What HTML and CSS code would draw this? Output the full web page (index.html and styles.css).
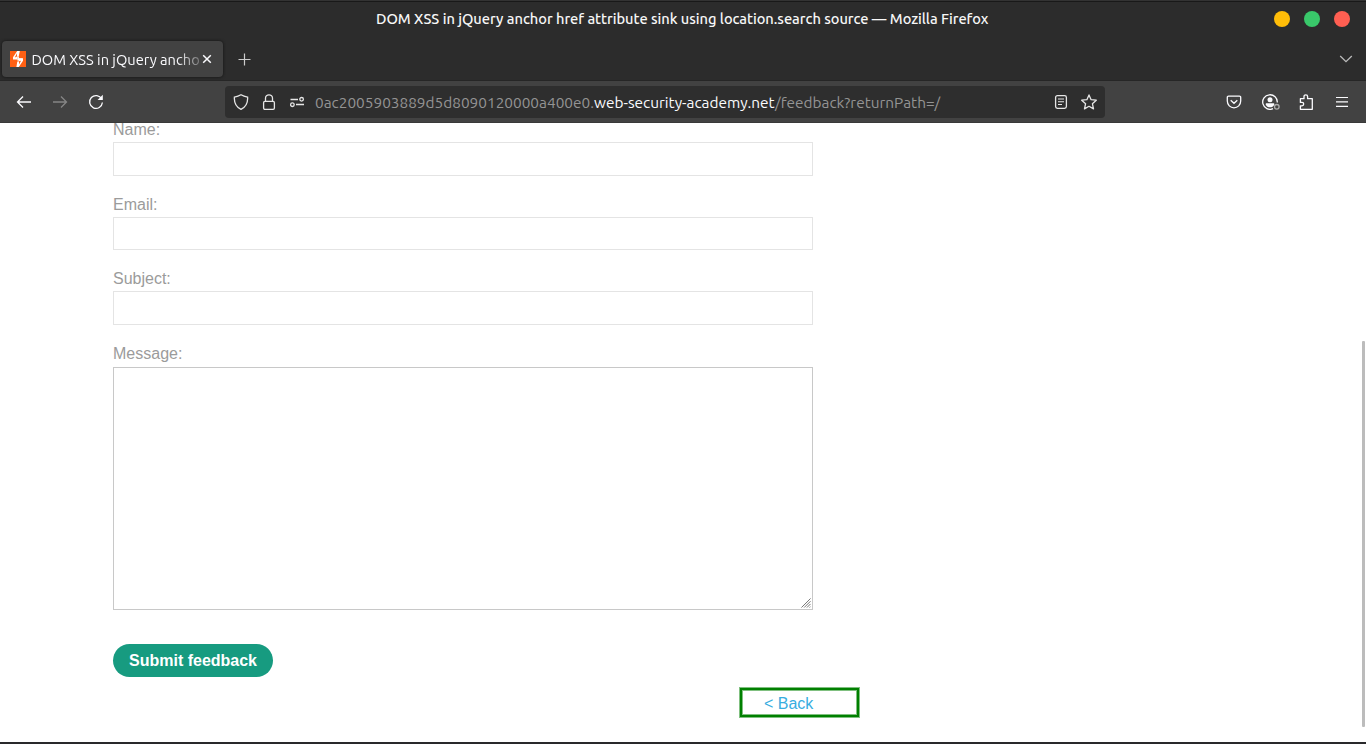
FILE: index.html
```html
<!DOCTYPE html>
<html lang="en">
<head>
<meta charset="utf-8">
<title>DOM XSS in jQuery anchor href attribute sink using location.search source</title>
<link rel="stylesheet" href="styles.css">
</head>
<body>
<div class="window">
  <header class="titlebar">
    <div class="window-title"><span class="title-text">DOM XSS in jQuery anchor href attribute sink using location.search source — Mozilla Firefox</span></div>
    <div class="window-buttons"><i class="dot minimize"></i><i class="dot maximize"></i><i class="dot close"></i></div>
  </header>
  <div class="tabs">
    <div class="tab">
      <svg class="icon favicon" viewBox="0 0 16 16"><rect width="16" height="16" fill="#ff6014"/><path d="M9.8 0L7.2 0 3 6.2V8.6H7.3V5.4H8.7ZM6.4 16L8.8 16 13 9.8V7.2H8.7V10.4H7.3Z" fill="#fff"/><path d="M7 2.2V5.6L4.8 6.4ZM9 13.6V10.2L11.2 9.4Z" fill="#ff6014"/><path d="M7.3 5.4H8.9V7.4H12.4V9.4H7.3Z" fill="#fff"/></svg>
      <span class="tab-label">DOM XSS in jQuery ancho</span>
      <svg class="tab-close" viewBox="0 0 10 10"><path d="M1.2 1.2l7.6 7.6M8.8 1.2L1.2 8.8"/></svg>
    </div>
    <svg class="new-tab" viewBox="0 0 13 13"><path d="M6.5 .5v12M.5 6.5h12"/></svg>
    <svg class="all-tabs" viewBox="0 0 14 8"><path d="M1.2 1L7 6.7 12.8 1"/></svg>
  </div>
  <nav class="toolbar">
    <div class="nav-buttons">
      <svg class="icon" viewBox="0 0 16 16"><path d="M15 8H1.6M7 2.5L1.5 8 7 13.5"/></svg>
      <svg class="icon disabled" viewBox="0 0 16 16"><path d="M1 8h13.4M9 2.5L14.5 8 9 13.5"/></svg>
      <svg class="icon" viewBox="0 0 16 16"><path d="M13.7 5A6.4 6.4 0 1 0 14.4 8.5"/><path d="M14.8 .8V6H9.6Z" fill="currentColor" stroke="none"/></svg>
    </div>
    <div class="urlbar">
      <svg class="icon" viewBox="0 0 16 16"><path d="M8 .8C6 2 3.8 2.7 1.4 3.1 1 8.6 3.3 13 8 15.3 12.7 13 15 8.6 14.6 3.1 12.2 2.7 10 2 8 .8Z"/></svg>
      <svg class="icon" viewBox="0 0 16 16"><rect x="2.6" y="7.4" width="10.8" height="7.9" rx="1.3"/><path d="M4.5 7.4V4.3a3.5 3.5 0 0 1 7 0v3.1"/></svg>
      <svg class="icon" viewBox="0 0 16 16"><path d="M1.5 5.5h7.5M7 10.5h8"/><circle cx="12.6" cy="5.3" r="1.8"/><circle cx="3.4" cy="10.7" r="1.8"/></svg>
      <div class="address"><span class="sub">0ac2005903889d5d8090120000a400e0.</span><span class="domain">web-security-academy.net</span><span class="path">/feedback?returnPath=/</span></div>
      <svg class="icon" viewBox="0 0 16 16"><rect x="2.6" y="1.6" width="10.8" height="12.8" rx="1.8"/><path d="M5 5h6M5 7.7h6M5 10.5h4" stroke-width="1.1"/></svg>
      <svg class="icon" viewBox="0 0 16 16"><path stroke-linejoin="round" d="M8 .9l2.1 4.8 5.2.5-3.9 3.5 1.1 5.2L8 12.3l-4.5 2.6 1.1-5.2L.7 6.2l5.2-.5Z"/></svg>
    </div>
    <div class="actions">
      <svg class="icon" viewBox="0 0 16 16"><path d="M2.5 2.2h11a1.2 1.2 0 0 1 1.2 1.2v3.7a6.7 6.7 0 0 1-13.4 0V3.4a1.2 1.2 0 0 1 1.2-1.2ZM4.7 6.2L8 9.3l3.3-3.1"/></svg>
      <svg class="icon account" viewBox="0 0 18 16"><path d="M11 14.7A7.3 7.3 0 1 1 15.3 8.5"/><circle cx="8" cy="5.8" r="2.5" fill="currentColor" stroke="none"/><path d="M3.9 9.2h8.2l.2 1.6c-1.5 3.4-7.1 3.4-8.6 0Z" fill="currentColor" stroke="none"/><circle cx="14.8" cy="12.8" r="2.3" stroke="#aaa"/></svg>
      <svg class="icon" viewBox="0 0 16 16"><path d="M2.4 15.3V11.8H4a1.7 1.7 0 0 0 0-3.4H2.4V4.7H6V2.6a1.8 1.8 0 0 1 3.6 0v2.1h4.7v10.6Z" stroke-linejoin="round"/></svg>
      <svg class="icon menu" viewBox="0 0 16 16"><path d="M2 3.5h12M2 7.8h12M2 12.4h12"/></svg>
    </div>
  </nav>
  <main class="page">
    <form class="feedback">
      <div class="field"><label for="name">Name:</label><input id="name" type="text"></div>
      <div class="field"><label for="email">Email:</label><input id="email" type="text"></div>
      <div class="field"><label for="subject">Subject:</label><input id="subject" type="text"></div>
      <div class="message"><label for="message">Message:</label>
        <div class="textarea-wrap"><textarea id="message"></textarea><svg class="grip" viewBox="0 0 11 11"><path d="M.5 10.5l10-10M3.5 10.5l7-7M6.5 10.5l4-4M9.5 10.5l1-1"/></svg></div>
      </div>
      <button class="submit" type="button">Submit feedback</button>
      <div class="back-box"><a class="back" href="#">&lt; Back</a></div>
    </form>
    <div class="scrollbar"></div>
  </main>
</div>
</body>
</html>
```
FILE: styles.css
```css
* { box-sizing: border-box; }
body { margin: 0; background: #2c2c2c; font-family: "Liberation Sans", Arial, sans-serif; }
.window { width: 1366px; height: 744px; display: flex; flex-direction: column; overflow: hidden; }
svg { display: block; flex: none; fill: none; stroke: currentColor; stroke-width: 1.3; }
.icon { width: 16px; height: 16px; }
.favicon { stroke: none; }

.titlebar { height: 38px; flex: none; display: grid; grid-template-columns: 1fr; align-items: center; background: linear-gradient(#333 1px, #191919 1px, #191919 2px, #2c2c2c 2px); color: #f7f7f7; }
.window-title, .window-buttons { grid-area: 1 / 1; }
.window-title { padding-left: 376px; font: 500 14.667px/20px Ubuntu, "Noto Sans", sans-serif; white-space: nowrap; }
.title-text { letter-spacing: -0.037px; }
.window-buttons { display: flex; gap: 14px; justify-content: flex-end; padding-right: 16px; }
.dot { width: 16px; height: 16px; border-radius: 50%; }
.minimize { background: #ffbd08; }
.maximize { background: #39c86a; }
.close { background: #ff5f52; }

.tabs { height: 43px; flex: none; display: flex; align-items: center; padding: 0 14px 3px 2px; border-bottom: 1px solid #262626; color: #fbfbfe; }
.tab { width: 221px; height: 36px; margin-top: 2px; border-radius: 4px; background: #424242; box-shadow: 0 0 3px #111; display: flex; align-items: center; padding: 0 11px 0 8px; }
.tab-label { width: 170.5px; height: 24px; padding-top: 2px; margin-left: 5.5px; overflow: hidden; white-space: nowrap; font: 14.667px/22px Ubuntu, "Noto Sans", sans-serif; -webkit-mask-image: linear-gradient(to right, #000 145px, transparent 176px); mask-image: linear-gradient(to right, #000 145px, transparent 176px); }
.tab-close { width: 10px; height: 10px; stroke-width: 1.5; }
.new-tab { width: 13px; height: 13px; margin: 4px 0 0 15px; color: #ccc; stroke-width: 1.2; }
.all-tabs { width: 14px; height: 8px; margin: 2px -1px 0 auto; color: #bbb; }

.toolbar { height: 42px; flex: none; display: flex; align-items: center; padding: 0 16px; background: #424242; color: #fbfbfe; border-bottom: 1px solid #393939; }
.nav-buttons { width: 209px; display: flex; gap: 20px; }
.disabled { color: #858585; }
.urlbar { width: 880px; height: 32px; border-radius: 4px; background: #2e2e2e; display: flex; align-items: center; gap: 12px; padding: 0 8px; color: #e6e6e6; }
.address { flex: 1; margin-left: -2px; padding-top: 2px; display: flex; white-space: nowrap; font: 15.4px/22px Ubuntu, "Noto Sans", sans-serif; color: #949494; }
.sub { width: 279px; }
.domain { width: 181px; color: #fbfbfe; }
.actions { margin-left: auto; display: flex; gap: 20px; }
.account { width: 18px; margin-right: -2px; }
.menu { stroke-width: 1.2; }

.page { flex: 1; display: flex; justify-content: space-between; background: #fff; border-bottom: 2px solid #29292b; overflow: hidden; }
.feedback { width: 860px; margin-top: -2px; padding-left: 113px; display: flex; flex-direction: column; align-items: flex-start; font-size: 16px; }
label { display: block; line-height: 18px; color: #9b9b9b; }
.field { height: 74.67px; width: 700px; flex: none; }
.field input { display: block; width: 700px; height: 33.67px; margin-top: 3px; border: 1px solid #e4e4e4; background: #fff; }
.message { flex: none; }
.textarea-wrap { position: relative; width: 700px; height: 243px; margin-top: 4px; }
textarea { display: block; width: 100%; height: 100%; resize: none; border: 1px solid #c8c8c8; }
.grip { position: absolute; right: 2px; bottom: 2px; width: 10px; height: 10px; color: #777; stroke-width: 1.1; }
.submit { width: 160px; height: 33px; flex: none; margin-top: 34px; padding: 1px 0 0; border: 0; border-radius: 17px; background: #179b80; color: #fff; font: bold 16px/18px "Liberation Sans", Arial, sans-serif; }
.back-box { width: 119px; height: 29px; flex: none; align-self: flex-end; margin: 11px 1px 0 0; border: 2px solid #008000; box-shadow: 0 0 0 1px #80c080, inset 0 0 0 1px #80c080; padding-left: 22px; line-height: 28px; }
.back { color: #38addf; text-decoration: none; }
.scrollbar { width: 3px; height: 386px; margin: 218px 1px 0 0; background: #bcbcbc; border-radius: 1px; }
```
